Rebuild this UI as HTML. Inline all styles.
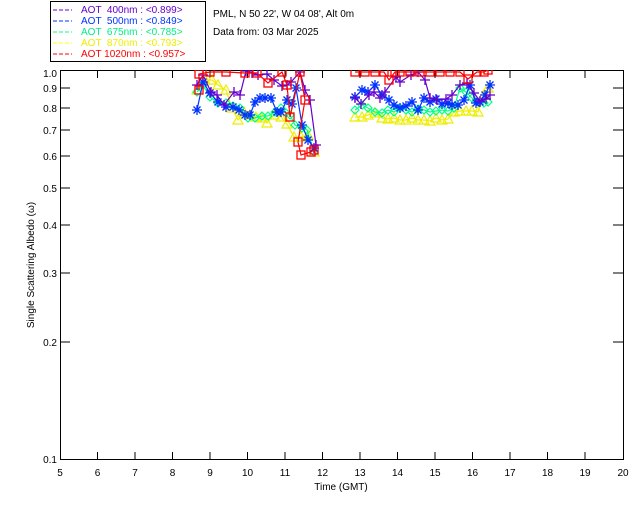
<!DOCTYPE html>
<html><head><meta charset="utf-8"><style>
body{margin:0;background:#fff;width:640px;height:512px;overflow:hidden}
svg text{font-family:"Liberation Sans",sans-serif;font-size:10px}
</style></head><body>
<svg width="640" height="512" xmlns="http://www.w3.org/2000/svg">
<defs>
<clipPath id="c"><rect x="60" y="70" width="563" height="390"/></clipPath>
<marker id="mp" markerUnits="userSpaceOnUse" markerWidth="12" markerHeight="12" refX="6" refY="6" overflow="visible"><path d="M1 6h10M6 1v10" stroke="#60c" stroke-width="1.3"/></marker>
<marker id="mb" markerUnits="userSpaceOnUse" markerWidth="12" markerHeight="12" refX="6" refY="6" overflow="visible"><path d="M1 6h10M6 1v10M2.5 2.5l7 7M9.5 2.5l-7 7" stroke="#03f" stroke-width="1.3"/></marker>
<marker id="mg" markerUnits="userSpaceOnUse" markerWidth="12" markerHeight="12" refX="6" refY="6" overflow="visible"><path d="M6 2l4 4-4 4-4-4z" fill="none" stroke="#0f8" stroke-width="1.2"/></marker>
<marker id="my" markerUnits="userSpaceOnUse" markerWidth="12" markerHeight="12" refX="6" refY="6" overflow="visible"><path d="M6 1l5 9h-10z" fill="none" stroke="#ee0" stroke-width="1.2"/></marker>
<marker id="mr" markerUnits="userSpaceOnUse" markerWidth="12" markerHeight="12" refX="6" refY="6" overflow="visible"><rect x="2" y="2" width="8" height="8" fill="none" stroke="#f00" stroke-width="1.3"/></marker>
</defs>
<rect x="50.5" y="1.5" width="155" height="60" fill="none" stroke="#000"/>
<g font-size="10">
<line x1="53" y1="10" x2="72" y2="10" stroke="#60c" stroke-dasharray="4,2"/><text x="81" y="13" fill="#60c" xml:space="preserve">AOT  400nm : &lt;0.899&gt;</text>
<line x1="53" y1="21" x2="72" y2="21" stroke="#03f" stroke-dasharray="4,2"/><text x="81" y="24" fill="#03f" xml:space="preserve">AOT  500nm : &lt;0.849&gt;</text>
<line x1="53" y1="32" x2="72" y2="32" stroke="#0f8" stroke-dasharray="4,2"/><text x="81" y="35" fill="#0e8" xml:space="preserve">AOT  675nm : &lt;0.785&gt;</text>
<line x1="53" y1="43" x2="72" y2="43" stroke="#ff0" stroke-dasharray="4,2"/><text x="81" y="46" fill="#ee0" xml:space="preserve">AOT  870nm : &lt;0.793&gt;</text>
<line x1="53" y1="54" x2="72" y2="54" stroke="#f00" stroke-dasharray="4,2"/><text x="81" y="57" fill="#f00" xml:space="preserve">AOT 1020nm : &lt;0.957&gt;</text>
</g>
<text x="213" y="17">PML, N 50 22', W 04 08', Alt 0m</text>
<text x="213" y="35">Data from: 03 Mar 2025</text>
<rect x="60.5" y="70.5" width="563" height="389" fill="none" stroke="#000"/>
<g stroke="#000">
<path d="M97.5 70v8M135 70v8M172.5 70v8M210 70v8M247.5 70v8M285 70v8M322.5 70v8M360 70v8M397.5 70v8M435 70v8M472.5 70v8M510 70v8M547.5 70v8M585 70v8M97.5 460v-8M135 460v-8M172.5 460v-8M210 460v-8M247.5 460v-8M285 460v-8M322.5 460v-8M360 460v-8M397.5 460v-8M435 460v-8M472.5 460v-8M510 460v-8M547.5 460v-8M585 460v-8"/>
<path d="M60 88h10M60 108h10M60 130h10M60 156h10M60 188h10M60 225h10M60 273h10M60 342h10M623 88h-10M623 108h-10M623 130h-10M623 156h-10M623 188h-10M623 225h-10M623 273h-10M623 342h-10"/>
</g>
<g text-anchor="end">
<text x="57" y="77">1.0</text><text x="57" y="92">0.9</text><text x="57" y="112">0.8</text><text x="57" y="134">0.7</text><text x="57" y="160">0.6</text><text x="57" y="192">0.5</text><text x="57" y="229">0.4</text><text x="57" y="277">0.3</text><text x="57" y="346">0.2</text><text x="57" y="463">0.1</text>
</g>
<g text-anchor="middle">
<text x="60" y="476">5</text><text x="97.5" y="476">6</text><text x="135" y="476">7</text><text x="172.5" y="476">8</text><text x="210" y="476">9</text><text x="247.5" y="476">10</text><text x="285" y="476">11</text><text x="322.5" y="476">12</text><text x="360" y="476">13</text><text x="397.5" y="476">14</text><text x="435" y="476">15</text><text x="472.5" y="476">16</text><text x="510" y="476">17</text><text x="547.5" y="476">18</text><text x="585" y="476">19</text><text x="623" y="476">20</text>
<text x="341" y="490">Time (GMT)</text>
<text transform="translate(34 265) rotate(-90)">Single Scattering Albedo (ω)</text>
</g>
<g clip-path="url(#c)" fill="none" stroke-width="1.2">
<g stroke="#ee0" marker-start="url(#my)" marker-mid="url(#my)" marker-end="url(#my)">
<polyline points="197,90 205,80 212,80 218,85 226,90 232,108 238,120 244,112 250,115 256,117 262,118 267,123 274,115 281,117 287,124 294,137 301,137 308,135 314,152"/>
<polyline points="355,117 362,117 368,115 375,113 382,118 388,119 394,118 400,120 406,120 412,118 418,120 424,120 430,121 436,118 442,120 448,119 454,112 460,111 466,111 472,111 478,112 484,95 488,88"/>
</g>
<g stroke="#0f8" marker-start="url(#mg)" marker-mid="url(#mg)" marker-end="url(#mg)">
<polyline points="197,92 203,85 210,97 218,103 226,103 233,106 240,108 248,118 255,118 262,116 268,116 275,112 281,108 286,113 290,115 295,125 302,128 307,130 314,152"/>
<polyline points="355,110 362,105 368,108 375,112 382,113 388,110 394,112 400,108 406,110 412,112 418,109 424,110 430,112 436,111 442,110 448,111 454,108 460,88 466,92 472,98 478,102 484,103 488,102"/>
</g>
<g stroke="#03f" marker-start="url(#mb)" marker-mid="url(#mb)" marker-end="url(#mb)">
<polyline points="197,110 203,82 210,93 218,102 226,107 233,107 239,110 245,115 250,115 255,102 260,98 265,98 271,98 277,112 281,112 287,100 292,104 296,88 302,125 308,140 314,148"/>
<polyline points="355,97 362,90 368,92 375,85 382,95 389,100 394,105 400,108 406,106 412,102 418,110 424,98 430,102 436,99 442,104 448,103 452,105 458,105 464,100 470,85 476,103 480,102 485,95 490,85"/>
</g>
<g stroke="#60c" marker-start="url(#mp)" marker-mid="url(#mp)" marker-end="url(#mp)">
<polyline points="197,85 203,75 211,92 217,95 224,105 234,92 240,95 246,71 252,73 258,75 267,74 274,80 282,86 287,85 291,82 300,72 305,90 310,100 316,145"/>
<polyline points="355,98 361,104 369,95 374,92 380,98 385,92 396,77 400,82 411,75 418,72 425,80 430,98 437,100 446,99 452,95 460,85 467,83 474,93 480,101 486,99 490,95"/>
</g>
<g stroke="#f00" marker-start="url(#mr)" marker-mid="url(#mr)" marker-end="url(#mr)">
<polyline points="199,90 199,74 210,72 226,72 245,73 257,73 268,83 282,72 287,85 290,117 300,72 305,100 298,142 301,155 311,152 314,150"/>
<polyline points="355,72 365,72 375,72 384,72 389,80 395,72 400,72 410,72 420,72 430,72 440,72 450,72 460,72 468,79 477,72 484,72 488,70"/>
</g>
</g>
</svg>
</body></html>
